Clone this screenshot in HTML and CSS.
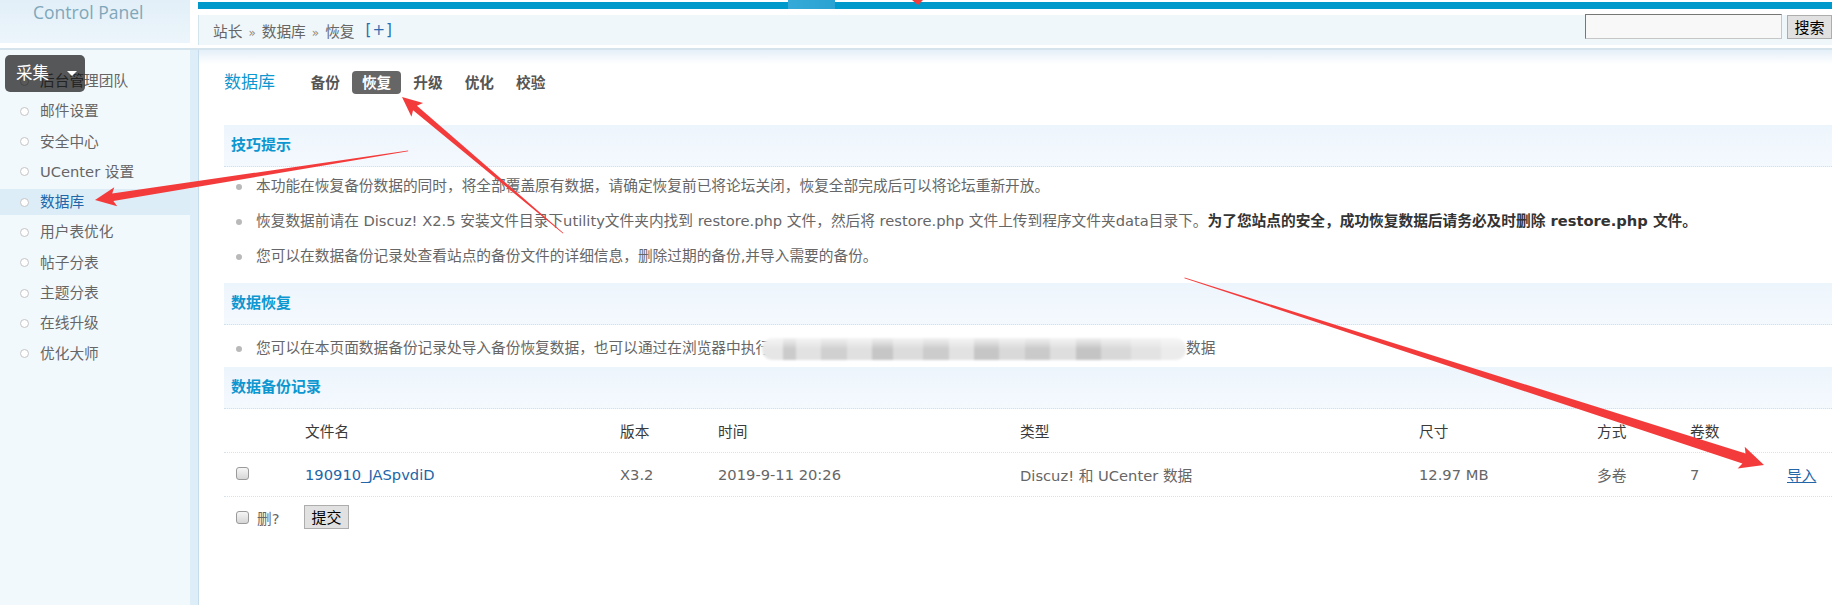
FILE: index.html
```html
<!DOCTYPE html>
<html lang="zh-CN">
<head>
<meta charset="utf-8">
<title>Control Panel - 数据库 - 恢复</title>
<link rel="stylesheet" href="styles.css">
</head>
<body>
<div class="top">
  <div class="logo">Control Panel</div>
  <div class="head">
    <div class="bluebar"></div>
    <div class="crumbs">
      <span class="path">站长<em>»</em>数据库<em>»</em>恢复</span><a class="plus">[+]</a>
      <div class="search"><input class="sinput" type="text"><button class="sbtn">搜索</button></div>
    </div>
  </div>
</div>
<div class="page">
  <div class="side">
    <ul class="menu">
      <li>后台管理团队</li>
      <li>邮件设置</li>
      <li>安全中心</li>
      <li>UCenter 设置</li>
      <li class="on">数据库</li>
      <li>用户表优化</li>
      <li>帖子分表</li>
      <li>主题分表</li>
      <li>在线升级</li>
      <li>优化大师</li>
    </ul>
  </div>
  <div class="sep"></div>
  <div class="main">
    <div class="nav">
      <span class="title">数据库</span>
      <a class="tab">备份</a><a class="tab on">恢复</a><a class="tab">升级</a><a class="tab">优化</a><a class="tab">校验</a>
    </div>
    <div class="bar first">技巧提示</div>
    <ul class="tips">
      <li>本功能在恢复备份数据的同时，将全部覆盖原有数据，请确定恢复前已将论坛关闭，恢复全部完成后可以将论坛重新开放。</li>
      <li>恢复数据前请在 Discuz! X2.5 安装文件目录下utility文件夹内找到 restore.php 文件，然后将 restore.php 文件上传到程序文件夹data目录下。<b>为了您站点的安全，成功恢复数据后请务必及时删除 restore.php 文件。</b></li>
      <li>您可以在数据备份记录处查看站点的备份文件的详细信息，删除过期的备份,并导入需要的备份。</li>
    </ul>
    <div class="bar">数据恢复</div>
    <ul class="tips one">
      <li>您可以在本页面数据备份记录处导入备份恢复数据，也可以通过在浏览器中执行<span class="mosaic"></span>数据</li>
    </ul>
    <div class="bar">数据备份记录</div>
    <div class="row hd">
      <span></span><span>文件名</span><span>版本</span><span>时间</span><span>类型</span><span>尺寸</span><span>方式</span><span>卷数</span><span></span>
    </div>
    <div class="row">
      <span class="chk"><input type="checkbox" class="cb"></span>
      <span><a class="lnk">190910_JASpvdiD</a></span>
      <span>X3.2</span>
      <span>2019-9-11 20:26</span>
      <span>Discuz! 和 UCenter 数据</span>
      <span>12.97 MB</span>
      <span>多卷</span>
      <span>7</span>
      <span><a class="lnk u">导入</a></span>
    </div>
    <div class="row foot">
      <span class="chk"><input type="checkbox" class="cb"><span class="del">删?</span></span>
      <span><button class="submit">提交</button></span>
    </div>
  </div>
</div>
<div class="popbtn">采集<i class="caret"></i></div>
<svg class="marks" width="1832" height="605" viewBox="0 0 1832 605">
  <g fill="#f43b3b">
    <polygon transform="translate(95,200) rotate(-8.9)" points="0,0 21,-9.5 18,-3.8 317,-0.4 317,0.4 18,3.8 21,9.5"/>
    <polygon transform="translate(402,97) rotate(40.2)" points="0,0 20,-9 17,-3 211,-0.4 211,0.4 17,3 20,9"/>
    <polygon transform="translate(1764,465) rotate(-162.1)" points="0,0 24,-11.5 21,-5.2 609,-0.4 609,0.4 21,5.2 24,11.5"/>
    <polygon points="912,0 923,0 918,5"/>
  </g>
</svg>
</body>
</html>
```
FILE: styles.css
```css
* { box-sizing: border-box; }
html, body { margin: 0; padding: 0; }
body {
  width: 1832px;
  height: 605px;
  overflow: hidden;
  position: relative;
  background: #fff;
  font-family: "DejaVu Sans", "Noto Sans CJK SC", sans-serif;
  font-size: 14.7px;
  color: #666;
}
a { text-decoration: none; cursor: pointer; }

/* header */
.top {
  display: flex;
  height: 50px;
  border-bottom: 2px solid #d4e3ec;
}
.logo {
  width: 190px;
  height: 48px;
  background: linear-gradient(#e2eff8 0, #ecf5fb 43px, #fff 43px);
  font-family: "Open Sans", "Noto Sans", sans-serif;
  font-size: 17.5px;
  line-height: 24px;
  color: #7fa7ba;
  padding-left: 33px;
}
.head {
  flex: 1;
  margin-left: 8px;
  display: flex;
  flex-direction: column;
}
.bluebar {
  height: 9px;
  background:
    linear-gradient(90deg, transparent 590px, #35aad8 590px, #2aa2d2 637px, transparent 637px),
    linear-gradient(#fff 2px, #0099cc 2px);
}
.crumbs {
  margin-top: 6px;
  height: 30px;
  background: #eff7fa;
  border-left: 1px solid #d2e4ec;
  display: flex;
  align-items: center;
  padding-left: 14px;
  color: #666;
}
.path em {
  font-style: normal;
  color: #9a8a78;
  font-size: 12px;
  margin: 0 6px;
}
.plus {
  color: #2b6db0;
  margin-left: 11px;
  letter-spacing: 1px;
  font-size: 15px;
}
.search {
  margin-left: auto;
  align-self: flex-start;
  margin-top: -1px;
  display: flex;
  gap: 5px;
}
.sinput {
  width: 197px;
  height: 25px;
  margin: 0;
  border: 1px solid;
  border-color: #777 #c6c6c6 #c6c6c6 #777;
  background: #f8f8f8;
}
.sbtn {
  width: 45px;
  height: 24px;
  margin: 1px 0 0;
  padding: 0;
  background: #e1e1e1;
  border: 1px solid #adadad;
  font-family: "Noto Sans CJK SC", sans-serif;
  font-size: 15px;
  line-height: 20px;
  color: #000;
}

/* page */
.page {
  display: flex;
  height: 555px;
}
.side {
  width: 190px;
  background: #f2f9fd;
}
.menu {
  list-style: none;
  margin: 0;
  padding: 18px 0 0;
}
.menu li {
  height: 26px;
  line-height: 26px;
  margin-bottom: 4.3px;
  padding-left: 20px;
  display: flex;
  align-items: center;
  color: #666;
  white-space: nowrap;
}
.menu li::before {
  content: "";
  width: 7px;
  height: 7px;
  border: 1.5px solid #c4c4c4;
  border-radius: 50%;
  background: #fff;
  margin-right: 11px;
  flex: none;
}
.menu li.on {
  background: #dcedf8;
  color: #2366a8;
}
.sep {
  width: 9px;
  background: #deeef9;
  border-right: 1px solid #c6dcea;
}
.main {
  flex: 1;
  padding-left: 25px;
  background: linear-gradient(#e4eff8, #fff 14px) no-repeat;
  min-width: 0;
}
.nav {
  padding-top: 21px;
  display: flex;
  align-items: center;
  height: 44px;
}
.title {
  font-size: 17px;
  color: #0e96cf;
  margin-right: 26px;
  line-height: 23px;
}
.tab {
  height: 23px;
  line-height: 23px;
  padding: 0 9.5px;
  margin-right: 3px;
  border-radius: 4px;
  font-weight: bold;
  color: #555;
}
.tab.on {
  background: #666;
  color: #fff;
}

/* sections */
.bar {
  height: 42px;
  line-height: 41px;
  padding-left: 7px;
  border-bottom: 1px dotted #cfe1ef;
  background: linear-gradient(#edf5fc, #f4f9fe);
  font-size: 15px;
  font-weight: bold;
  color: #0d97d0;
}
.bar.first { margin-top: 31px; }
.tips {
  list-style: none;
  margin: 0;
  padding: 1px 0 10px;
}
.tips.one { padding: 5px 0 2px; }
.tips li {
  height: 35px;
  line-height: 35px;
  white-space: nowrap;
  color: #666;
}
.tips li::before {
  content: "";
  display: inline-block;
  width: 6px;
  height: 6px;
  border-radius: 50%;
  background: #b9b9b9;
  margin: 0 14px 0 12px;
  vertical-align: middle;
}
.tips b { color: #333; }
.mosaic {
  display: inline-block;
  width: 424px;
  height: 22px;
  margin-left: -8px;
  margin-right: 0;
  vertical-align: middle;
  border-radius: 10px;
  filter: blur(0.8px);
  background:
    linear-gradient(rgba(248,248,248,0.85) 0, rgba(248,248,248,0) 50%),
    linear-gradient(90deg,
      #e6e6e6 0 5%, #cbcbcb 5% 8%, #e2e2e2 8% 14%, #d0d0d0 14% 20%,
      #e0e0e0 20% 26%, #c6c6c6 26% 31%, #dcdcdc 31% 38%, #cccccc 38% 44%,
      #e2e2e2 44% 50%, #c6c6c6 50% 56%, #d9d9d9 56% 62%, #cacaca 62% 68%,
      #dedede 68% 74%, #c4c4c4 74% 80%, #d8d8d8 80% 87%, #e3e3e3 87% 94%, #ececec 94% 100%);
}

/* table */
.row {
  display: grid;
  grid-template-columns: 81px 315px 98px 302px 399px 178px 93px 97px 1fr;
  height: 44px;
  align-items: center;
  border-bottom: 1px dotted #d3e4f0;
  color: #666;
  white-space: nowrap;
}
.row.hd { color: #3a3a3a; }
.row.foot {
  height: 40px;
  border-bottom: 0;
}
.chk {
  display: flex;
  align-items: center;
  padding-left: 12px;
}
.cb {
  appearance: none;
  -webkit-appearance: none;
  width: 13px;
  height: 13px;
  margin: 0 0 3px;
  border: 1px solid #9a9a9a;
  border-radius: 3px;
  background: linear-gradient(#f6f6f6, #d6d6d6);
}
.foot .cb { margin: 0; }
.del { margin-left: 8px; color: #666; }
.lnk { color: #2366a8; }
.lnk.u { text-decoration: underline; }
.submit {
  width: 45px;
  height: 24px;
  margin: 0 0 0 -1px;
  padding: 0;
  background: #e1e1e1;
  border: 1px solid #adadad;
  font-family: "Noto Sans CJK SC", sans-serif;
  font-size: 15px;
  line-height: 20px;
  color: #000;
}

/* overlays */
.popbtn {
  position: absolute;
  left: 5px;
  top: 55px;
  width: 80px;
  height: 37px;
  border-radius: 5px;
  background: rgba(0, 0, 0, 0.65);
  color: #fff;
  font-family: "Noto Sans CJK SC", sans-serif;
  font-size: 16.5px;
  line-height: 34px;
  padding-left: 11px;
}
.caret {
  position: absolute;
  left: 62px;
  top: 16px;
  width: 0;
  height: 0;
  border-left: 5px solid transparent;
  border-right: 5px solid transparent;
  border-top: 5px solid #fff;
}
.marks {
  position: absolute;
  left: 0;
  top: 0;
  pointer-events: none;
}
```
